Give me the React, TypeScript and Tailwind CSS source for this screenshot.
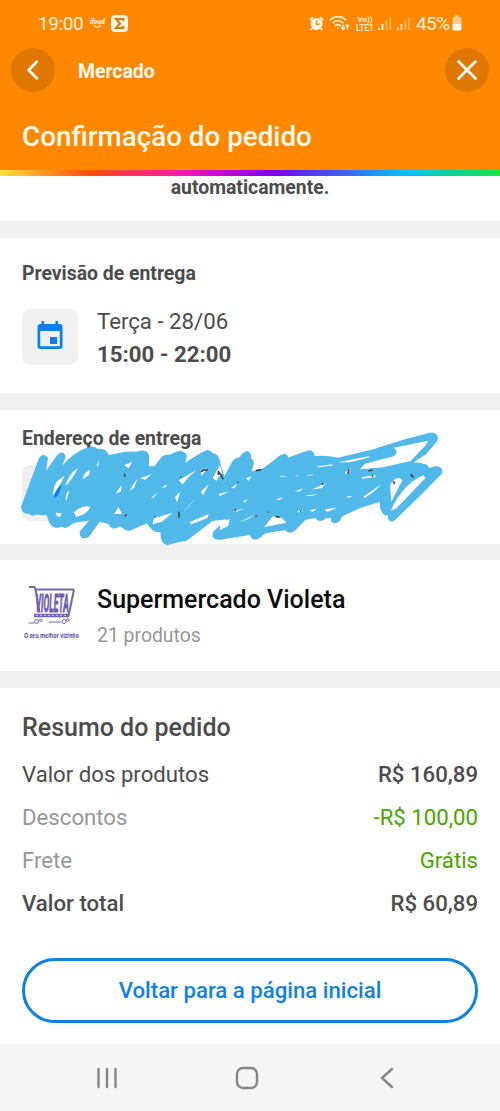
import type { ReactNode } from 'react';
import { clsx } from 'clsx';

const summaryRows = [
  { label: 'Valor dos produtos', value: 'R$ 160,89', labelClass: 'text-[#4c4c4c]', valueClass: 'font-medium text-[#4c4c4c]' },
  { label: 'Descontos', value: '-R$ 100,00', labelClass: 'text-[#979797]', valueClass: 'text-[#4aa500]' },
  { label: 'Frete', value: 'Grátis', labelClass: 'text-[#979797]', valueClass: 'text-[#4aa500]' },
  { label: 'Valor total', value: 'R$ 60,89', labelClass: 'font-medium text-[#4c4c4c]', valueClass: 'font-medium text-[#4c4c4c]' },
];

function SignalIcon({ className }: { className?: string }) {
  return (
    <svg viewBox="0 0 14 15" className={clsx('h-[15px] w-[14px]', className)} fill="#fff3d6">
      <rect x="0" y="11.5" width="1.6" height="2.5" />
      <rect x="3.6" y="8" width="1.8" height="6" />
      <rect x="7.5" y="4.5" width="1.8" height="9.5" opacity="0.4" />
      <rect x="11.3" y="1" width="1.8" height="13" opacity="0.4" />
    </svg>
  );
}

function StatusBar() {
  return (
    <div className="flex h-[46px] items-center pl-[38px] text-[19px] leading-none text-[#fff3dc]">
      <span className="w-[46px] tracking-[-0.4px]">19:00</span>
      <svg viewBox="0 0 16 12" className="ml-[6px] h-3 w-4 overflow-visible">
        <text x="0" y="7" fontSize="7.5" fontWeight="900" fontStyle="italic" fill="#fff3dc" textLength="15" lengthAdjust="spacingAndGlyphs">ifood</text>
        <path d="M3.5 8.2Q7 12 11 8.2" fill="none" stroke="#fff3dc" strokeWidth="1.2" />
      </svg>
      <svg viewBox="0 0 17 17" className="ml-[5px] h-[17px] w-[17px]">
        <rect width="17" height="17" rx="4" fill="#fff8e8" />
        <path d="M12.3 6V4H5l4 4.5-4 4.5h7.3v-2" fill="none" stroke="#e07a00" strokeWidth="2.1" />
      </svg>
      <svg viewBox="0 0 15 15" className="ml-[181px] h-[15px] w-[15px]">
        <circle cx="7.5" cy="8" r="6" fill="#fff8e8" />
        <path d="M1 4.2 4 1.2M14 4.2l-3-3M3 12.5 1.8 14M12 12.5l1.2 1.5" stroke="#fff8e8" strokeWidth="2" />
        <path d="M7.5 4.5v3.8h3" fill="none" stroke="#ff8800" strokeWidth="1.4" />
      </svg>
      <svg viewBox="0 0 21 16" className="ml-[5px] h-4 w-[21px]" fill="none" stroke="#fff3dc" strokeWidth="1.7">
        <path d="M1 5.2C5.5.3 12.5.3 17 5.2M3.6 8.2c3-3.3 7.8-3.3 10.8 0M6 11c1.7-1.9 4.4-1.9 6 0" />
        <circle cx="9" cy="13" r=".8" fill="#fff3dc" stroke="none" />
        <path d="M14 9.5v5M12 12.5l2 2 2-2M18.3 14.5v-5M16.3 11.5l2-2 2 2" strokeWidth="1.3" />
      </svg>
      <svg viewBox="0 0 19 17" className="ml-[6px] h-[17px] w-[19px]" fill="#fff3dc" fontWeight="700">
        <text x="1.5" y="7" fontSize="8" textLength="15" lengthAdjust="spacingAndGlyphs">Vo))</text>
        <text x="0" y="15.5" fontSize="8.5" textLength="17.5" lengthAdjust="spacingAndGlyphs">LTE1</text>
      </svg>
      <SignalIcon className="ml-[3px]" />
      <SignalIcon className="ml-[5px]" />
      <span className="ml-[5px] w-[33px] tracking-[-0.6px]">45%</span>
      <svg viewBox="0 0 10 16" className="ml-[3px] h-4 w-[10px]">
        <path d="M3 0h4v2h1.5q1 0 1 1v6h-9V3q0-1 1-1H3z" fill="#ffc98a" />
        <path d="M.5 9h9v5q0 1.5-1.5 1.5H2Q.5 15.5.5 14z" fill="#fffaf0" />
      </svg>
    </div>
  );
}

function RoundButton({ label, children }: { label: string; children: ReactNode }) {
  return (
    <button aria-label={label} className="flex h-[44px] w-[44px] items-center justify-center rounded-full bg-[#df7800]">
      <svg viewBox="0 0 24 24" className="h-6 w-6" fill="none" stroke="#fffaf0" strokeWidth="2.8" strokeLinecap="round" strokeLinejoin="round">
        {children}
      </svg>
    </button>
  );
}

function Header() {
  return (
    <header className="h-[176px] bg-[#ff8800]">
      <StatusBar />
      <div className="flex h-[48px] items-center px-[11px]">
        <RoundButton label="Voltar">
          <path d="M15.8 3.8 7.6 12l8.2 8.2" />
        </RoundButton>
        <h2 className="mt-[3px] ml-[23px] flex-1 text-[19.4px] leading-none font-bold text-[#fffaf0]">Mercado</h2>
        <RoundButton label="Fechar">
          <path d="M3.5 3.5l17 17M20.5 3.5l-17 17" />
        </RoundButton>
      </div>
      <h1 className="h-[76px] pt-[26px] pl-[22px] text-[27.8px] leading-[34px] font-medium text-[#fffaf0]">Confirmação do pedido</h1>
      <div className="h-[6px] bg-[linear-gradient(90deg,#ffe23b_0%,#ff4b0c_18%,#ff16b0_36%,#7a00f5_55%,#00bfff_81%,#14e63c_100%)]" />
    </header>
  );
}

// Marker scribble drawn over the delivery address
function Scribble() {
  return (
    <svg viewBox="0 0 1500 420" className="absolute top-[5px] left-0 h-[140px] w-[500px]">
      <path
        fill="#50b9e9"
        stroke="#50b9e9"
        strokeWidth="4"
        strokeLinejoin="round"
        d="M65 275L118 132Q128 114 142 128L135 176L172 123Q187 105 195 125L181 162Q220 112 268 97Q285 95 293 104Q318 100 325 123Q380 108 410 112Q442 100 446 126L444 154Q458 158 466 154L487 126Q499 118 512 121Q545 100 558 120Q560 136 548 151Q600 115 622 107Q632 108 637 116Q658 118 660 150L673 188L700 138Q710 128 720 130Q730 108 745 111Q754 117 750 130Q762 136 758 150L752 172L790 162L840 124Q858 111 864 130L920 110Q941 103 942 125Q980 122 1014 130L1120 105L1215 75L1290 55Q1315 53 1311 76L1278 115L1233 145Q1260 143 1268 148Q1286 150 1285 162L1306 156Q1327 155 1325 174L1260 240L1183 314Q1169 324 1165 306L1168 297Q1150 307 1143 280L1140 258L1080 277L1025 303Q1014 331 996 319L994 307L978 306Q958 326 947 306L915 313L884 345Q866 359 858 343L795 353L778 367Q757 379 750 358L660 372Q633 373 642 350L688 310L637 316L560 375L540 378L502 388Q480 383 484 349Q458 354 442 322L390 345Q379 347 370 338L358 332Q336 348 326 325L298 318L265 364Q240 376 241 350L272 314L234 320Q220 320 206 332Q195 341 187 333Q160 344 149 320L142 299L108 297Q98 304 88 294Q68 298 65 275Z"
      />
      <g fill="#fff">
        <path d="M1080 163L1095 146L1175 125Q1192 119 1189 107L1182 98L1284 77Q1284 85 1265 103L1232 138L1150 157Z" />
        <path d="M1170 213Q1176 192 1197 188L1207 196L1174 260ZM1173 287Q1178 268 1205 232Q1230 198 1270 181L1276 190L1188 281Z" />
        <path d="M162 217Q168 195 193 184L175 220L159 242ZM249 192Q250 172 270 165L267 181ZM198 259Q195 232 208 228ZM222 292Q245 270 271 275Q263 298 228 306ZM168 293L185 294L181 306L170 303Z" />
        <path d="M196 211Q210 171 234 160Q218 191 199 211ZM291 151L297 133L294 157ZM373 150L396 141L386 160ZM388 227L413 189L402 218Z" />
        <path d="M346 236L366 209L362 230ZM342 297L356 277L366 297ZM453 250L473 232L460 249ZM485 218L500 207L498 217ZM525 246L540 231L531 262ZM542 300L586 250L569 271Z" />
        <path d="M421 190L455 177L436 194ZM536 196L590 165L569 183L548 208ZM601 166L623 158L605 182ZM638 189L660 150L666 174L649 197ZM603 230L627 207L609 241Z" />
        <path d="M462 310L518 293L486 320L458 328ZM568 322L626 297L622 309L574 328ZM662 322L690 312L684 333L659 346ZM716 322L748 307L768 299L742 313ZM795 334L818 304L845 309L860 323L790 337Z" />
        <path d="M738 190L754 184L746 198ZM693 219L709 207L705 220ZM656 237L688 229L660 243ZM702 287L733 281L708 290ZM729 260L743 251L736 262Z" />
        <path d="M840 182L863 183L844 186ZM887 181L896 182L888 184ZM918 180L945 179L928 182ZM883 230L910 219L900 229ZM914 242L954 237L933 243ZM934 224L977 205L966 219Z" />
        <path d="M948 155L994 148L1001 151L957 157ZM1014 142L1105 124L1110 127L1050 142ZM1037 170L1052 160L1047 176L1035 177ZM1038 245L1059 242L1046 248ZM1090 245L1145 207L1121 230L1094 249Z" />
        <path d="M1085 187L1129 180L1125 186L1086 191ZM929 286L950 281L938 291ZM827 253L848 247L838 256ZM893 288L910 287L896 293ZM974 283L1011 278L981 291Z" />
      </g>
      <path d="M162 247Q163 230 184 208Q181 233 168 247Z" fill="#087be9" />
      <path d="M263 95q5 1 6-5M374 176v10M374 303l6-4M463 304l2 2M537 290v18M541 186l3-1M603 171Q608 163 624 164M655 168L670 193M655 168v12M704 286l5-1M712 203l3-2M768 168Q776 162 784 166M704 284l4 1M766 301l4 3M803 291l3 1M827 304L839 307M900 290l3-1M965 208l6-2M1043 177L1047 163M1105 168l13-3M1115 182l5 2M1179 199L1185 206M1231 178L1241 187M1234 184l5-3" fill="none" stroke="#4b4646" strokeWidth="5" />
    </svg>
  );
}

function StoreLogo() {
  return (
    <svg viewBox="0 0 60 60" className="h-[60px] w-[60px] overflow-visible" fill="#6d5ead">
      <path d="M7 5h5.5l1 2.500H52M13.500 7.500l4 23M52 7.500 46.500 34" fill="none" stroke="#7466ae" strokeWidth="2" />
      <path d="M12 33.500h35" stroke="#7466ae" strokeWidth="3.400" />
      <path d="M14 33.500h32" stroke="#c5bfe0" strokeWidth="1" strokeDasharray="2 2" />
      <text transform="translate(13.500 29.500) scale(.86 2.500)" fontFamily="Roboto" fontSize="10" fontWeight="700" fontStyle="italic" stroke="#6d5ead" strokeWidth=".35">
        VIOLETA
      </text>
      <g fill="none" stroke="#7466ae" strokeWidth="1">
        <circle cx="14.700" cy="39.500" r="2" />
        <circle cx="18.800" cy="38.300" r="1.300" />
        <circle cx="42" cy="39.500" r="2" />
        <circle cx="45.800" cy="38" r="1.300" />
        <path d="M6.500 41h6M27 40h12" />
      </g>
      <text x="2" y="55.500" fontFamily="Open Sans" fontSize="7" fontWeight="700" fill="#574a99" textLength="55" lengthAdjust="spacingAndGlyphs">O seu melhor vizinho</text>
    </svg>
  );
}

export default function App() {
  return (
    <div className="flex h-[1111px] w-[500px] flex-col overflow-hidden bg-white font-[Roboto,sans-serif] text-[#4c4c4c]">
      <Header />

      <main className="flex h-[868px] flex-col bg-[#f0f0f0]">
        <section className="mb-[17px] h-[45px] bg-white text-center">
          <p className="text-[19.4px] leading-[23px] font-bold">automaticamente.</p>
        </section>

        {/* Delivery forecast */}
        <section className="mb-[17px] h-[155px] bg-white px-[22px] pt-6">
          <h3 className="text-[19.4px] leading-[23px] font-bold">Previsão de entrega</h3>
          <div className="mt-6 flex">
            <div className="flex h-[56px] w-[56px] items-center justify-center rounded-lg bg-[#f0f0f0]">
              <svg viewBox="0 0 26 30" className="mb-[2px] h-[30px] w-[26px]">
                <path d="M3.5 3H22.5Q25.5 3 25.5 6V25Q25.5 28 22.5 28H3.5Q.5 28 .5 25V6Q.5 3 3.5 3ZM3.2 10V25.3H22.8V10Z" fill="#087ff2" fillRule="evenodd" />
                <path d="M4.5 0H7V4H4.5ZM18.5 0H21V4H18.5ZM13 16H20V23H13Z" fill="#087ff2" />
              </svg>
            </div>
            <div className="ml-[19px] text-[22.2px] leading-[33px]">
              <p className="-mt-[4px]">Terça - 28/06</p>
              <p className="font-bold">15:00 - 22:00</p>
            </div>
          </div>
        </section>

        {/* Delivery address */}
        <section className="relative mb-4 h-[134px] bg-white px-[22px] pt-[17px]">
          <h3 className="text-[19.4px] leading-[23px] font-bold">Endereço de entrega</h3>
          <div className="mt-[15px] h-[56px] w-[56px] rounded-lg bg-[#f0f0f0]" />
          <Scribble />
        </section>

        {/* Store */}
        <section className="mb-[17px] flex h-[111px] bg-white pt-[22px] pl-[22px]">
          <StoreLogo />
          <div className="mt-px ml-[15px]">
            <h3 className="text-[25px] leading-[34px] font-medium text-[#0c0c0c]">Supermercado Violeta</h3>
            <p className="mt-[7px] text-[19.4px] leading-[24px] text-[#979797]">21 produtos</p>
          </div>
        </section>

        {/* Order summary */}
        <section className="flex-1 bg-white px-[22px] pt-[23px]">
          <h3 className="text-[25px] leading-[34px] font-medium">Resumo do pedido</h3>
          <dl className="mt-[8px] text-[22.2px]">
            {summaryRows.map((row) => (
              <div key={row.label} className="flex h-[43px] items-center justify-between">
                <dt className={row.labelClass}>{row.label}</dt>
                <dd className={row.valueClass}>{row.value}</dd>
              </div>
            ))}
          </dl>
          <button className="mt-[33px] h-[65px] w-full rounded-full border-[3px] border-[#0f80e4] text-[22.2px] font-medium text-[#0f80e4]">
            Voltar para a página inicial
          </button>
        </section>
      </main>

      {/* System navigation */}
      <nav className="flex h-[67px] items-center bg-[#f5f5f5] pl-[96px] text-[#858585]">
        <svg viewBox="0 0 22 22" className="h-[22px] w-[22px]" stroke="currentColor" strokeWidth="2.4" strokeLinecap="round">
          <path d="M2.5 2v18M11 2v18M19.5 2v18" />
        </svg>
        <svg viewBox="0 0 24 24" className="ml-[117px] h-6 w-6" fill="none" stroke="currentColor" strokeWidth="2.4">
          <rect x="2" y="2" width="20" height="20" rx="6" />
        </svg>
        <svg viewBox="0 0 16 22" className="ml-[120px] h-[22px] w-4" fill="none" stroke="currentColor" strokeWidth="2.4" strokeLinecap="round">
          <path d="M13 2 3 11l10 9" />
        </svg>
      </nav>
    </div>
  );
}
